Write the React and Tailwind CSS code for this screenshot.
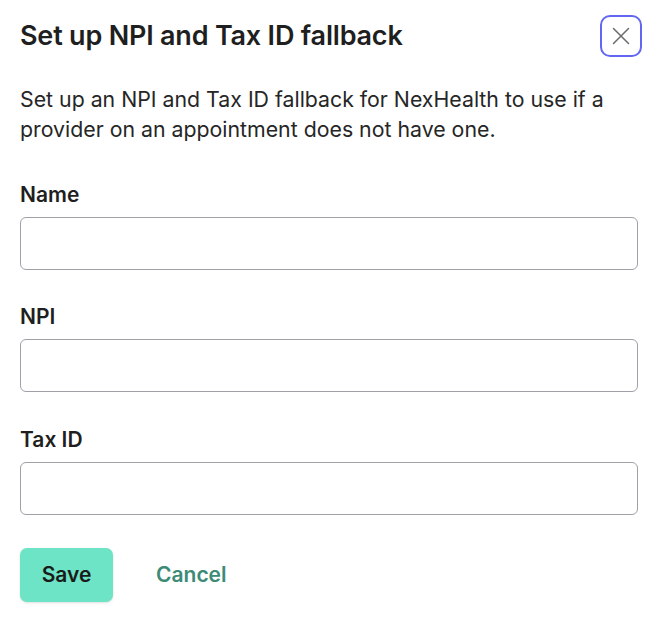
import React, { useState } from 'react';

function Field({ label, value, onChange, className }) {
  return (
    <div className={className}>
      <label className="block text-[21px] leading-[24px] font-semibold text-[#1f1f1f]">
        {label}
      </label>
      <input
        type="text"
        value={value}
        onChange={(e) => onChange(e.target.value)}
        className="mt-[10px] block w-full h-[53px] rounded-[6px] border border-[#a0a0a8] bg-white px-3 text-[20px] focus:outline-none"
      />
    </div>
  );
}

export default function App() {
  const [name, setName] = useState('');
  const [npi, setNpi] = useState('');
  const [taxId, setTaxId] = useState('');

  return (
    <div className="min-h-screen bg-white font-['Inter',sans-serif] text-[#1f1f1f]">
      <div className="pl-5 pr-[18px] pt-[17px]">
        {/* Header */}
        <div className="flex items-start justify-between">
          <h2 className="mt-[3px] text-[27px] leading-[32px] font-semibold tracking-[-0.2px]">
            Set up NPI and Tax ID fallback
          </h2>
          <button className="-mr-[4px] -mt-[2px] flex h-[42px] w-[42px] items-center justify-center rounded-[10px] border-2 border-[#6366f1] text-[#6b6b6b]">
            <svg width="24" height="24" viewBox="0 0 24 24" fill="none" stroke="currentColor" strokeWidth="1.5" strokeLinecap="round">
              <path d="M4.5 4.5l15 15M19.5 4.5l-15 15" />
            </svg>
          </button>
        </div>

        <p className="mt-[27px] text-[21.3px] leading-[30px] text-[#262626] pr-6">
          Set up an NPI and Tax ID fallback for NexHealth to use if a provider on an appointment does not have one.
        </p>

        <Field label="Name" value={name} onChange={setName} className="mt-[39px]" />
        <Field label="NPI" value={npi} onChange={setNpi} className="mt-[35px]" />
        <Field label="Tax ID" value={taxId} onChange={setTaxId} className="mt-[36px]" />

        <div className="mt-[33px] flex items-center">
          <button className="h-[54px] w-[93px] rounded-[7px] bg-[#6ce4c5] text-[21px] font-semibold text-[#1a1a1a] shadow-sm">
            Save
          </button>
          <button className="ml-[43px] text-[21px] font-semibold text-[#3d8a77]">
            Cancel
          </button>
        </div>
      </div>
    </div>
  );
}
